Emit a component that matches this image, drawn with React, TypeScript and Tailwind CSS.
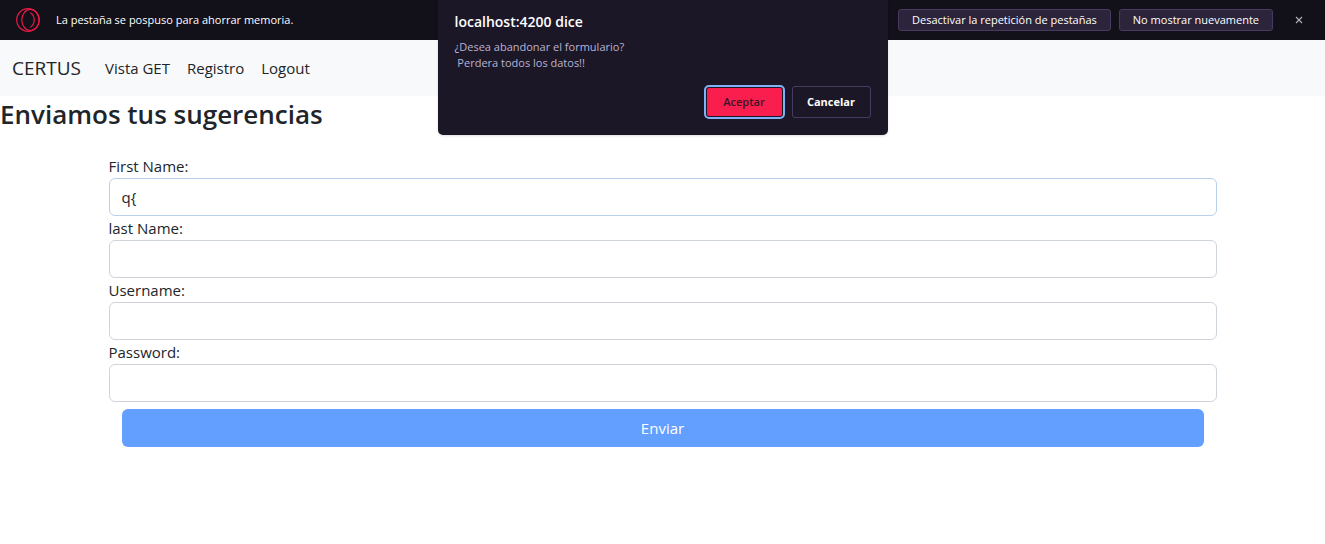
import { useState } from "react";

const fields = [
  { id: "firstName", label: "First Name:", type: "text", initial: "q{" },
  { id: "lastName", label: "last Name:", type: "text", initial: "" },
  { id: "username", label: "Username:", type: "text", initial: "" },
  { id: "password", label: "Password:", type: "password", initial: "" },
];

const links = ["Vista GET", "Registro", "Logout"];

function OperaLogo() {
  return (
    <svg className="size-6 shrink-0" viewBox="0 0 24 24" fill="none" stroke="#e51a45" strokeWidth="1.2" aria-hidden="true">
      <circle cx="12" cy="12" r="11.3" />
      <ellipse cx="14.4" cy="12" rx="8.6" ry="10.6" />
      <path d="M14.300 4.800c2.300 1.300 3.900 4 3.900 7.200s-1.600 5.900-3.900 7.200" />
    </svg>
  );
}

function TabNotice() {
  return (
    <div className="flex h-10 items-center bg-[#121019] px-4 text-[11px] leading-5 text-white">
      <OperaLogo />
      <p className="ml-4 grow font-medium">La pestaña se pospuso para ahorrar memoria.</p>
      <div className="flex gap-2">
        <button type="button" className="h-[22px] rounded-[3px] border border-[#473b62] bg-[#2c243b] px-[13px] font-medium">
          Desactivar la repetición de pestañas
        </button>
        <button type="button" className="h-[22px] rounded-[3px] border border-[#473b62] bg-[#2c243b] px-[13px] font-medium">
          No mostrar nuevamente
        </button>
      </div>
      <button type="button" aria-label="Cerrar" className="ml-4 flex h-5 w-5 items-center justify-center text-[#b5b2bf]">
        <svg className="size-2" viewBox="0 0 8 8" stroke="currentColor" strokeWidth="1.1" aria-hidden="true">
          <path d="M1 1l6 6M7 1L1 7" />
        </svg>
      </button>
    </div>
  );
}

function ConfirmDialog() {
  return (
    <div
      role="dialog"
      aria-labelledby="dialog-title"
      className="absolute top-0 left-1/2 w-[450px] -translate-x-1/2 rounded-b-[5px] bg-[#1c1726] px-[17px] pt-3 pb-[17px] shadow-sm"
    >
      <h1 id="dialog-title" className="text-sm leading-5 font-semibold text-white">
        localhost:4200 dice
      </h1>
      <p className="mt-[7px] text-[11px] leading-4 font-medium whitespace-pre text-[#b9b2d3]">
        {"¿Desea abandonar el formulario?\n Perdera todos los datos!!"}
      </p>
      <div className="mt-[15px] flex items-center justify-end gap-[9px] text-[11px]">
        <button
          type="button"
          className="h-[30px] w-[77px] rounded-[3px] border border-[#1c1726] bg-[#fa1e4e] font-semibold text-[#3b1629] outline-2 outline-[#83b1f8]"
        >
          Aceptar
        </button>
        <button type="button" className="h-8 w-[79px] rounded-[3px] border border-[#473b62] font-bold text-white">
          Cancelar
        </button>
      </div>
    </div>
  );
}

export default function App() {
  const [values, setValues] = useState<Record<string, string>>(
    Object.fromEntries(fields.map((f) => [f.id, f.initial])),
  );

  return (
    <div className="relative min-h-screen bg-white font-['Open_Sans','Noto_Sans',sans-serif] text-[15px] leading-6 text-[#212529]">
      <TabNotice />
      <nav className="flex h-14 items-center bg-[#f8f9fa] px-3">
        <a href="#" className="mr-6 text-[19px] leading-[30px]">
          CERTUS
        </a>
        <div className="flex gap-[17px]">
          {links.map((link) => (
            <a key={link} href="#">
              {link}
            </a>
          ))}
        </div>
      </nav>
      <h2 className="text-[26px] leading-9 font-semibold">Enviamos tus sugerencias</h2>
      <form className="mx-auto mt-[22px] max-w-[1108px]" onSubmit={(e) => e.preventDefault()}>
        {fields.map((field, index) => (
          <div key={field.id}>
            <label htmlFor={field.id} className="block w-fit">
              {field.label}
            </label>
            <input
              id={field.id}
              type={field.type}
              value={values[field.id]}
              onChange={(e) => setValues({ ...values, [field.id]: e.target.value })}
              className={`block h-[38px] w-full rounded-md border px-3 outline-none ${
                index === 0 ? "border-[#b9cfec]" : "border-[#ced4da]"
              }`}
            />
          </div>
        ))}
        <div className="mt-[7px] px-[13px]">
          <button type="submit" className="h-[38px] w-full rounded-md bg-[#629fff] text-white">
            Enviar
          </button>
        </div>
      </form>
      <ConfirmDialog />
    </div>
  );
}
